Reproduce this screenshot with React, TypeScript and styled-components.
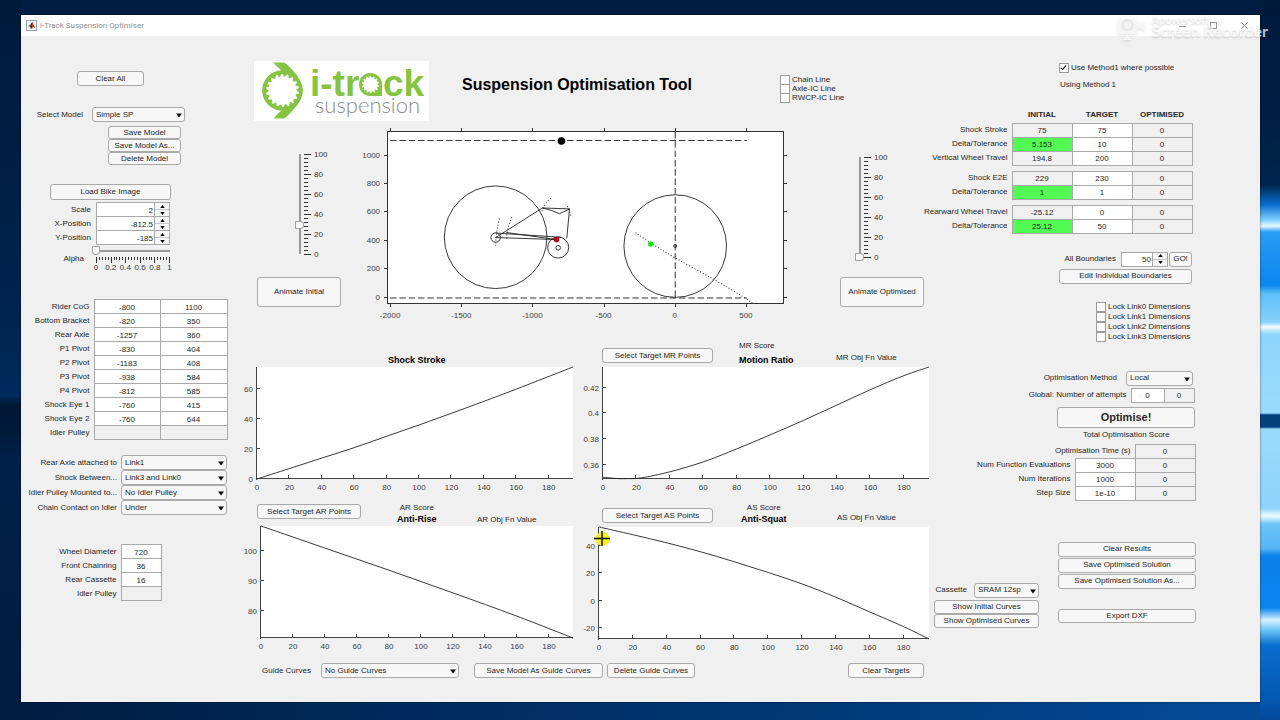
import React, { useId } from "react";
import styled, { createGlobalStyle } from "styled-components";

const GlobalStyle = createGlobalStyle`
  *, *::before, *::after { box-sizing: border-box; }
  html, body { margin: 0; padding: 0; }
  body {
    font-family: "Liberation Sans", Arial, sans-serif;
    font-size: 8px;
    line-height: 10px;
    color: #262626;
  }
  button, input, select { font: inherit; color: inherit; margin: 0; }
`;

/* ---------- desktop and window frame ---------- */

const Desktop = styled.div`
  position: relative;
  min-height: 100vh;
  padding: 15px 20px 18px 21px;
  background:
    linear-gradient(180deg,
      #001a3b 0, #001e44 120px, #00264f 185px, #0b6fd0 205px, #7fd0ff 220px, #e8f8ff 226px,
      #2a9df5 232px, #0a86ef 285px, #5fc0f8 294px, #86d2fa 322px, #f4fcff 327px, #8ed6fb 334px,
      #9adafc 413px, #03407c 415px, #03407c 427px, #9adafc 429px, #8fd4fb 508px, #f0fbff 516px,
      #6cc4f8 524px, #55b6f6 548px, #0a80ea 556px, #0a86f0 608px, #d8f2ff 620px, #6cc4f6 630px,
      #0a6ed0 645px, #0458b0 700px, #03489a 720px) right top / 20px 100% no-repeat,
    linear-gradient(180deg, #001a3b 0, #001e44 160px, #002652 340px, #002b5c 395px, #001836 405px,
      #001a3a 432px, #00204a 460px, #001e44 600px, #001c40 702px) left top / 21px 100% no-repeat,
    linear-gradient(90deg, #001c40 0, #002a5a 30%, #003a78 65%, #044c9a 100%) left bottom / 100% 18px no-repeat,
    #001c40;
`;

const Window = styled.main`
  display: flex;
  flex-direction: column;
  min-height: calc(100vh - 33px);
  background: #f0f0f0;
  box-shadow: 0 0 2px rgba(0, 0, 0, 0.6);
`;

const TitleBar = styled.header`
  display: flex;
  align-items: center;
  height: 21px;
  padding: 0 12px 0 5px;
  gap: 3px;
  background: #ffffff;
`;

const WindowTitle = styled.span`
  flex: 1;
  font-family: Roboto, "Open Sans", sans-serif;
  font-size: 8px;
  line-height: 12px;
  color: #8f8f8f;
`;

const CaptionButtons = styled.div`
  display: flex;
  gap: 24px;
`;

const CaptionButton = styled.button`
  width: 7px;
  height: 8px;
  padding: 0;
  border: 0;
  background: none;
  line-height: 0;
`;

const Body = styled.div`
  flex: 1;
  display: grid;
  grid-template-columns: 219px minmax(0, 1fr) 330px;
`;

const Column = styled.section`
  display: flex;
  flex-direction: column;
  min-width: 0;
`;

/* ---------- controls ---------- */

const Button = styled.button<{ $w?: number; $h?: number; $size?: number }>`
  display: block;
  flex: none;
  width: ${(p) => (p.$w ? `${p.$w}px` : "100%")};
  height: ${(p) => p.$h ?? 15}px;
  padding: 0;
  border: 1px solid #a9a9a9;
  border-radius: 3px;
  background: #f7f7f7;
  font-size: ${(p) => p.$size ?? 8}px;
  font-weight: ${(p) => (p.$size ? "bold" : "normal")};
  line-height: 10px;
  text-align: center;
  white-space: nowrap;
`;

const SelectBox = styled.span<{ $w: number }>`
  position: relative;
  display: block;
  flex: none;
  width: ${(p) => p.$w}px;
  height: 15px;

  select {
    display: block;
    appearance: none;
    width: 100%;
    height: 15px;
    padding: 0 12px 0 3px;
    border: 1px solid #a9a9a9;
    border-radius: 3px;
    background: #f7f7f7;
    line-height: 10px;
  }

  svg {
    position: absolute;
    right: 3px;
    top: 6px;
    pointer-events: none;
  }
`;

const CheckLabel = styled.label<{ $h: number }>`
  display: flex;
  align-items: center;
  gap: 2px;
  height: ${(p) => p.$h}px;
  white-space: nowrap;
`;

const CheckBox = styled.input.attrs({ type: "checkbox" })`
  appearance: none;
  position: relative;
  flex: none;
  width: 10px;
  height: 10px;
  border: 1px solid #9c9c9c;
  background: #ffffff;

  &:checked::after {
    content: "";
    position: absolute;
    left: 2px;
    top: 0;
    width: 3px;
    height: 6px;
    border: solid #111111;
    border-width: 0 1px 1px 0;
    transform: rotate(40deg);
  }
`;

const SpinnerFrame = styled.span<{ $w: number }>`
  display: flex;
  flex: none;
  width: ${(p) => p.$w}px;
  height: 15px;
  border: 1px solid #a9a9a9;
  background: #ffffff;

  input {
    flex: 1;
    min-width: 0;
    height: 13px;
    padding: 1px 1px 0 0;
    border: 0;
    background: transparent;
    text-align: right;
  }
`;

const SpinnerArrows = styled.span`
  display: flex;
  flex-direction: column;
  width: 15px;
  border-left: 1px solid #a9a9a9;

  button {
    flex: 1;
    display: flex;
    align-items: center;
    justify-content: center;
    min-height: 0;
    padding: 0;
    border: 0;
    background: #f7f7f7;
  }
  button + button { border-top: 1px solid #c4c4c4; }
`;

const Line = styled.div<{ $mt?: number; $gap?: number; $end?: number; $start?: number }>`
  display: flex;
  align-items: center;
  justify-content: ${(p) => (p.$end !== undefined ? "flex-end" : "flex-start")};
  gap: ${(p) => p.$gap ?? 0}px;
  margin-top: ${(p) => p.$mt ?? 0}px;
  padding-right: ${(p) => p.$end ?? 0}px;
  padding-left: ${(p) => p.$start ?? 0}px;
  white-space: nowrap;
`;

const FieldLabel = styled.label<{ $w: number }>`
  flex: none;
  width: ${(p) => p.$w}px;
  text-align: right;
  white-space: nowrap;
`;

const Stack = styled.div<{ $mt?: number; $ml?: number; $mr?: number; $gap?: number; $w?: number }>`
  display: flex;
  flex-direction: column;
  gap: ${(p) => p.$gap ?? 0}px;
  margin-top: ${(p) => p.$mt ?? 0}px;
  margin-left: ${(p) => p.$ml ?? 0}px;
  margin-right: ${(p) => p.$mr ?? 0}px;
  ${(p) => (p.$w ? `width: ${p.$w}px; flex: none;` : "")}
`;

const Spinners = styled.div`
  display: flex;
  flex-direction: column;
  margin-top: 2px;

  ${Line} + ${Line} { margin-top: -1px; }
`;

const DataTable = styled.table<{ $w: number; $mt: number }>`
  width: ${(p) => p.$w}px;
  margin-top: ${(p) => p.$mt}px;
  border-collapse: collapse;
  table-layout: fixed;

  tr { height: 14px; }
  th, td { padding: 0; vertical-align: middle; }
  th { font-weight: normal; }
  thead th { height: 15px; font-weight: bold; text-align: center; }
`;

const RowLabel = styled.label`
  display: flex;
  justify-content: flex-end;
  padding-right: 4px;
  line-height: 10px;
  white-space: nowrap;
`;

type Tone = "plain" | "locked" | "good";
const toneColor: Record<Tone, string> = { plain: "#ffffff", locked: "#f0f0f0", good: "#54fa54" };

const Cell = styled.td<{ $tone: Tone }>`
  border: 1px solid #a9a9a9;
  background: ${(p) => toneColor[p.$tone]};

  input {
    display: block;
    width: 100%;
    height: 13px;
    padding: 1px 0 0;
    border: 0;
    background: transparent;
    text-align: center;
  }
`;

const SpacerRow = styled.tr`
  && { height: 6px; }
  td { height: 6px; line-height: 0; }
`;

const Range = styled.input.attrs({ type: "range" })<{ $vertical?: boolean }>`
  appearance: none;
  display: block;
  flex: none;
  margin: 0;
  ${(p) =>
    p.$vertical
      ? `writing-mode: vertical-lr; direction: rtl; width: 9px; height: 108px;
         background: linear-gradient(#989898, #989898) center / 2px 100px no-repeat;`
      : `width: 82px; height: 9px;
         background: linear-gradient(#989898, #989898) center / 74px 2px no-repeat;`}

  &::-webkit-slider-runnable-track { background: transparent; }
  &::-webkit-slider-thumb {
    appearance: none;
    width: ${(p) => (p.$vertical ? 9 : 8)}px;
    height: ${(p) => (p.$vertical ? 8 : 9)}px;
    border: 1px solid #a0a0a0;
    border-radius: ${(p) => (p.$vertical ? "1px 5px 5px 1px" : "1px 1px 5px 5px")};
    background: #fafafa;
  }
`;

const Art = styled.svg`
  display: block;
  overflow: visible;
  font-family: "Liberation Sans", Arial, sans-serif;
  font-size: 8px;
`;

const Triangle = ({ up = false, w = 6, h = 4 }: { up?: boolean; w?: number; h?: number }) => (
  <svg width={w} height={h} viewBox="0 0 6 4" aria-hidden="true">
    <path d={up ? "M0 4H6L3 0Z" : "M0 0H6L3 4Z"} fill="#000" />
  </svg>
);

function Select({ id, w, value, label }: { id: string; w: number; value: string; label?: string }) {
  return (
    <SelectBox $w={w}>
      <select id={id} aria-label={label} defaultValue={value}>
        <option>{value}</option>
      </select>
      <Triangle h={5} />
    </SelectBox>
  );
}

function Spinner({ id, w, value }: { id: string; w: number; value: string }) {
  return (
    <SpinnerFrame $w={w}>
      <input id={id} type="text" inputMode="decimal" defaultValue={value} />
      <SpinnerArrows>
        <button type="button" aria-label="Increase"><Triangle up w={5} h={3} /></button>
        <button type="button" aria-label="Decrease"><Triangle w={5} h={3} /></button>
      </SpinnerArrows>
    </SpinnerFrame>
  );
}

type CellSpec = [string, Tone] | null;

function DataRow({ label, cells, span = 1 }: { label: string; cells: CellSpec[]; span?: number }) {
  const id = useId();
  return (
    <tr>
      <th scope="row" colSpan={span}>
        <RowLabel htmlFor={id}>{label}</RowLabel>
      </th>
      {cells.map((c, i) =>
        c ? (
          <Cell key={i} $tone={c[1]}>
            <input
              id={i === 0 ? id : undefined}
              aria-label={`${label} ${i + 1}`}
              defaultValue={c[0]}
              readOnly={c[1] !== "plain"}
            />
          </Cell>
        ) : null
      )}
    </tr>
  );
}

function Check({ text, h = 10, checked = false }: { text: string; h?: number; checked?: boolean }) {
  return (
    <CheckLabel $h={h}>
      <CheckBox defaultChecked={checked} />
      {text}
    </CheckLabel>
  );
}

/* ---------- left column ---------- */

const pivots: [string, string, string][] = [
  ["Rider CoG", "-800", "1100"],
  ["Bottom Bracket", "-820", "350"],
  ["Rear Axle", "-1257", "360"],
  ["P1 Pivot", "-830", "404"],
  ["P2 Pivot", "-1183", "408"],
  ["P3 Pivot", "-938", "584"],
  ["P4 Pivot", "-812", "585"],
  ["Shock Eye 1", "-760", "415"],
  ["Shock Eye 2", "-760", "644"],
  ["Idler Pulley", "", ""],
];

const links: [string, string][] = [
  ["Rear Axle attached to", "Link1"],
  ["Shock Between...", "Link3 and Link0"],
  ["Idler Pulley Mounted to...", "No Idler Pulley"],
  ["Chain Contact on Idler", "Under"],
];

const drivetrain: [string, string][] = [
  ["Wheel Diameter", "720"],
  ["Front Chainring", "36"],
  ["Rear Cassette", "16"],
  ["Idler Pulley", ""],
];

const AlphaTicks = () => (
  <Art width="82" height="18" viewBox="0 0 82 18" fill="#333" textAnchor="middle">
    {Array.from({ length: 26 }, (_, i) => (
      <rect key={i} x={Math.round(4 + i * 2.92)} y="2" width="1" height={i % 5 === 0 ? 6 : 3} />
    ))}
    {["0", "0.2", "0.4", "0.6", "0.8", "1"].map((t, i) => (
      <text key={t} x={4 + i * 14.7} y="15">{t}</text>
    ))}
  </Art>
);

function ModelColumn() {
  return (
    <Column>
      <Line $mt={35} $start={56}><Button $w={67}>Clear All</Button></Line>
      <Line $mt={21} $start={14} $gap={9}>
        <FieldLabel $w={48} htmlFor="model">Select Model</FieldLabel>
        <Select id="model" w={93} value="Simple SP" />
      </Line>
      <Stack $mt={4} $ml={87} $w={73}>
        <Button $h={13}>Save Model</Button>
        <Button $h={13}>Save Model As...</Button>
        <Button $h={13}>Delete Model</Button>
      </Stack>
      <Line $mt={19} $start={29}><Button $w={121} $h={16}>Load Bike Image</Button></Line>
      <Spinners>
        {[["Scale", "2"], ["X-Position", "-812.5"], ["Y-Position", "-185"]].map(([l, v]) => (
          <Line key={l} $gap={5}>
            <FieldLabel $w={70} htmlFor={l}>{l}</FieldLabel>
            <Spinner id={l} w={74} value={v} />
          </Line>
        ))}
      </Spinners>
      <Line $gap={8}>
        <FieldLabel $w={63} htmlFor="alpha">Alpha</FieldLabel>
        <Stack $mt={1}>
          <Range id="alpha" min="0" max="1" step="0.01" defaultValue="0" />
          <AlphaTicks />
        </Stack>
      </Line>
      <DataTable $w={206} $mt={26}>
        <colgroup><col width="73" /><col width="66" /><col width="67" /></colgroup>
        <tbody>
          {pivots.map(([l, x, y]) => (
            <DataRow key={l} label={l} cells={[[x, x ? "plain" : "locked"], [y, y ? "plain" : "locked"]]} />
          ))}
        </tbody>
      </DataTable>
      <Stack $mt={15}>
        {links.map(([l, v]) => (
          <Line key={l} $gap={4}>
            <FieldLabel $w={96} htmlFor={l}>{l}</FieldLabel>
            <Select id={l} w={106} value={v} />
          </Line>
        ))}
      </Stack>
      <DataTable $w={140} $mt={29}>
        <colgroup><col width="100" /><col width="40" /></colgroup>
        <tbody>
          {drivetrain.map(([l, v]) => (
            <DataRow key={l} label={l} cells={[[v, v ? "plain" : "locked"]]} />
          ))}
        </tbody>
      </DataTable>
    </Column>
  );
}

/* ---------- centre column ---------- */

const TopRow = styled.div`
  display: flex;
  align-items: flex-start;
  height: 90px;
  padding: 25px 0 0 14px;
`;

const Heading = styled.h1`
  margin: 14px 0 0 33px;
  font-size: 16px;
  line-height: 20px;
  color: #000000;
  white-space: nowrap;
`;

const LineChecks = styled.div`
  width: 65px;
  margin: 14px 85px 0 auto;
`;

const PlotRow = styled.div`
  display: flex;
  align-items: flex-start;
  height: 198px;
  padding: 0 6px 0 17px;
`;

const SliderColumn = styled.div<{ $pad: number; $top: number }>`
  display: flex;
  flex-direction: column;
  justify-content: space-between;
  flex: none;
  width: 84px;
  height: 181px;
  padding-top: ${(p) => p.$top}px;

  & > div { display: flex; padding-left: ${(p) => p.$pad}px; }
`;

const PlotFrame = styled.div`
  flex: 1;
  min-width: 0;
  margin: 0 49px 0 9px;
`;

const ChartGrid = styled.div`
  display: grid;
  grid-template-columns: 340fr 350fr;
  margin-top: 16px;
  row-gap: 8px;
`;

const ChartHead = styled.div<{ $h: number; $cols: string; $start: number }>`
  display: grid;
  grid-template-columns: ${(p) => p.$cols};
  height: ${(p) => p.$h}px;
  padding-left: ${(p) => p.$start}px;
  white-space: nowrap;
`;

const ChartNames = styled.div<{ $align: string; $gap: number }>`
  display: flex;
  flex-direction: column;
  align-items: ${(p) => p.$align};
  justify-self: start;
  gap: ${(p) => p.$gap}px;
  padding-top: 1px;

  h2 { margin: 0; font-size: 9px; line-height: 12px; color: #000000; }
`;

const ObjValue = styled.span<{ $top: number }>`
  padding-top: ${(p) => p.$top}px;
`;

const Inset = styled.div<{ $top: number }>`
  padding-top: ${(p) => p.$top}px;
`;

const GuideRow = styled.div`
  display: flex;
  align-items: center;
  margin-top: 9px;
  padding: 0 6px 0 22px;

  label { width: 59px; }
  ${SelectBox} { margin-right: 15px; }
  button + button { margin-left: 4px; }
  button:last-child { margin-left: auto; }
`;

const GearTeeth = ({ cx, cy, r, n, depth }: { cx: number; cy: number; r: number; n: number; depth: number }) => {
  const pts: string[] = [];
  for (let i = 0; i < n; i++) {
    [[0.0, 0], [0.3, depth], [0.55, depth], [0.8, 0]].forEach(([f, d]) => {
      const a = ((i + f) / n) * Math.PI * 2;
      pts.push(`${(cx + (r + d) * Math.cos(a)).toFixed(2)},${(cy + (r + d) * Math.sin(a)).toFixed(2)}`);
    });
  }
  return <polygon points={pts.join(" ")} fill="#fff" />;
};

const Logo = () => (
  <Art width="175" height="60" viewBox="0 0 175 60" role="img" aria-label="i-track suspension">
    <rect width="175" height="60" fill="#fff" />
    <g fill="#84c441">
      <circle cx="28.5" cy="29.5" r="20.3" />
      <path d="M19.5 1.5H30Q33 2.5 44 15.5L38 20L26 13L28 10Q23 6 19.5 1.5Z" />
      <path d="M19.5 57.5H30Q33 56 44 43.5L38 39L26 46L28 49Q23 53 19.5 57.5Z" />
    </g>
    <GearTeeth cx={28.5} cy={29.5} r={14} n={18} depth={2.6} />
    <text y="35" fontFamily="Liberation Sans" fontSize="37" fontWeight="bold" fill="#84c441">
      <tspan x="56">i-tr</tspan>
      <tspan x="129">ck</tspan>
    </text>
    <path d="M128 35V23A11.500 11.500 0 1 0 116.500 35Z" fill="#84c441" />
    <GearTeeth cx={116.5} cy={23.5} r={7} n={14} depth={1.8} />
    <text x="61" y="52" fontFamily="Lato" fontWeight="300" fontSize="22" fill="#8c8c8c">suspension</text>
  </Art>
);

const SliderScale = () => (
  <Art width="28" height="108" viewBox="0 0 28 108" fill="#333">
    {Array.from({ length: 26 }, (_, i) => (
      <rect key={i} x="0" y={4 + i * 4} width={i % 5 === 0 ? 7 : 4} height="1" />
    ))}
    {[100, 80, 60, 40, 20, 0].map((v, i) => (
      <text key={v} x="10" y={7 + i * 20}>{v}</text>
    ))}
  </Art>
);

function BikePlot() {
  const xs = [390, 461, 532, 603, 674, 745];
  const ys = [155, 183, 211, 240, 268, 297];
  return (
    <Art width="100%" viewBox="350 126 440 198" role="img" aria-label="Suspension layout">
      <rect x="387.5" y="131.5" width="395" height="172" fill="#fff" stroke="#333" shapeRendering="crispEdges" />
      <g fill="#333" shapeRendering="crispEdges">
        {xs.map((x) => (
          <React.Fragment key={x}>
            <rect x={x} y="128" width="1" height="3" />
            <rect x={x} y="304" width="1" height="3" />
          </React.Fragment>
        ))}
        {ys.map((y) => (
          <React.Fragment key={y}>
            <rect x="384" y={y} width="3" height="1" />
            <rect x="783" y={y} width="3" height="1" />
          </React.Fragment>
        ))}
      </g>
      <g fill="#404040" textAnchor="middle">
        {xs.map((x, i) => (
          <text key={x} x={x} y="318">{-2000 + i * 500}</text>
        ))}
      </g>
      <g fill="#404040" textAnchor="end">
        {ys.map((y, i) => (
          <text key={y} x="380" y={y + 3}>{1000 - i * 200}</text>
        ))}
      </g>
      <g fill="none" stroke="#333" strokeDasharray="6.4 2.9">
        <path d="M390 140.5H746M390 297.5H746M674.5 132V297" />
      </g>
      <g fill="none" stroke="#222" strokeWidth="0.9">
        <circle cx="495.3" cy="237" r="51.2" />
        <circle cx="674.5" cy="245.8" r="51.2" />
        <circle cx="495.3" cy="237.3" r="4.7" />
        <circle cx="557.7" cy="247.3" r="10.5" />
        <circle cx="557.7" cy="247.5" r="2.3" />
        <circle cx="674.5" cy="245.8" r="1.5" />
        <path d="M495.3 237.3L542 207.8L569 208.7L566.3 238" />
        <path d="M542 207.8Q552 210 559 213.5Q565 211 569 208.7" />
        <path d="M495.3 232.8L561 237M506 232.3L556 239.3L495.3 237.3" />
      </g>
      <g fill="none" stroke="#222" strokeDasharray="1 2">
        <path d="M499 218.5Q495.5 232 495.3 246" />
        <path d="M511.5 217Q506.5 228 506.3 239" />
        <path d="M550.5 198Q543 204 541.3 212" />
        <path d="M567 206L570.5 216" />
        <path d="M635 232.3Q653 246 694 268.5T752 303" />
      </g>
      <circle cx="561" cy="141" r="3.8" fill="#000" />
      <circle cx="556" cy="239.3" r="2.8" fill="#c00010" />
      <circle cx="650" cy="243.7" r="2.8" fill="#1ee61e" />
    </Art>
  );
}

type Pt = [number, number];

function smooth(p: Pt[]) {
  let d = `M${p[0][0]} ${p[0][1]}`;
  for (let i = 0; i < p.length - 1; i++) {
    const a = p[i - 1] ?? p[i];
    const b = p[i];
    const c = p[i + 1];
    const e = p[i + 2] ?? c;
    d += `C${b[0] + (c[0] - a[0]) / 6} ${b[1] + (c[1] - a[1]) / 6} ${c[0] - (e[0] - b[0]) / 6} ${c[1] - (e[1] - b[1]) / 6} ${c[0]} ${c[1]}`;
  }
  return d;
}

interface ChartProps {
  w: number;
  left: number;
  right: number;
  top: number;
  bottom: number;
  yMin: number;
  yMax: number;
  yTicks: number[];
  data: Pt[];
  name: string;
  children?: React.ReactNode;
}

function Chart({ w, left, right, top, bottom, yMin, yMax, yTicks, data, name, children }: ChartProps) {
  const sx = (v: number) => left + (v / 195) * (right - left);
  const sy = (v: number) => bottom - ((v - yMin) / (yMax - yMin)) * (bottom - top);
  const xTicks = Array.from({ length: 10 }, (_, i) => i * 20);
  return (
    <Art width="100%" viewBox={`0 0 ${w} 128`} role="img" aria-label={name}>
      <rect x={left} y={top} width={right - left} height={bottom - top} fill="#fff" />
      <g fill="#444" shapeRendering="crispEdges">
        <rect x={left - 1} y={top} width="1" height={bottom - top + 1} />
        <rect x={left - 1} y={bottom - 1} width={right - left + 1} height="1" />
        {xTicks.map((t) => (
          <rect key={t} x={Math.round(sx(t)) - 1} y={bottom - 4} width="1" height="3" />
        ))}
        {yTicks.map((t) => (
          <rect key={t} x={left} y={Math.round(sy(t)) - 1} width="3" height="1" />
        ))}
      </g>
      <g fill="#404040" textAnchor="middle">
        {xTicks.map((t) => (
          <text key={t} x={sx(t)} y={bottom + 11}>{t}</text>
        ))}
      </g>
      <g fill="#404040" textAnchor="end">
        {yTicks.map((t) => (
          <text key={t} x={left - 4} y={sy(t) + 3}>{t}</text>
        ))}
      </g>
      <path d={smooth(data.map(([x, y]) => [sx(x), sy(y)] as Pt))} fill="none" stroke="#222" strokeWidth="0.9" />
      {children}
    </Art>
  );
}

const strokeData: Pt[] = [[0, 0], [20, 7], [40, 14], [60, 21], [80, 28.6], [100, 36.2], [120, 44], [140, 52], [160, 60.2], [195, 75]];
const ratioData: Pt[] = [[0, 0.3504], [8, 0.3494], [14, 0.3493], [23, 0.3499], [40, 0.3546], [60, 0.3623], [80, 0.3724], [100, 0.3833], [120, 0.3946], [140, 0.4065], [160, 0.4184], [180, 0.4293], [195, 0.436]];
const riseData: Pt[] = [[0, 108.3], [40, 100.9], [80, 93.5], [120, 85.9], [160, 78.1], [195, 70.8]];
const squatData: Pt[] = [[0, 53.8], [20, 48.2], [40, 42.3], [60, 35.8], [80, 28.5], [100, 20.7], [120, 12.4], [140, 2.7], [160, -8], [180, -18.7], [195, -27.7]];

function PlotColumn() {
  return (
    <Column>
      <TopRow>
        <Logo />
        <Heading>Suspension Optimisation Tool</Heading>
        <LineChecks>
          <Check text="Chain Line" h={9} />
          <Check text="Axle-IC Line" h={9} />
          <Check text="RWCP-IC Line" h={10} />
        </LineChecks>
      </TopRow>
      <PlotRow>
        <SliderColumn $pad={38} $top={24}>
          <div>
            <Range $vertical aria-label="Initial travel" min="0" max="100" defaultValue="29" />
            <SliderScale />
          </div>
          <Button $h={30}>Animate Initial</Button>
        </SliderColumn>
        <PlotFrame><BikePlot /></PlotFrame>
        <SliderColumn $pad={15} $top={27}>
          <div>
            <Range $vertical aria-label="Optimised travel" min="0" max="100" defaultValue="0" />
            <SliderScale />
          </div>
          <Button $h={30}>Animate Optimised</Button>
        </SliderColumn>
      </PlotRow>

      <ChartGrid>
        <div>
          <ChartHead $h={26} $cols="1fr" $start={148}>
            <Inset $top={13}>
              <ChartNames $align="flex-start" $gap={0}><h2>Shock Stroke</h2></ChartNames>
            </Inset>
          </ChartHead>
          <Chart name="Shock Stroke" w={340} left={17} right={333} top={1} bottom={113} yMin={0} yMax={75} yTicks={[0, 20, 40, 60]} data={strokeData} />
        </div>
        <div>
          <ChartHead $h={26} $cols="137px 97px 1fr" $start={22}>
            <Inset $top={8}><Button $w={111}>Select Target MR Points</Button></Inset>
            <ChartNames $align="flex-start" $gap={3}>
              <span>MR Score</span>
              <h2>Motion Ratio</h2>
            </ChartNames>
            <ObjValue $top={13}>MR Obj Fn Value</ObjValue>
          </ChartHead>
          <Chart name="Motion Ratio" w={350} left={23} right={349} top={1} bottom={113} yMin={0.349} yMax={0.436} yTicks={[0.36, 0.38, 0.4, 0.42]} data={ratioData} />
        </div>
        <div>
          <ChartHead $h={24} $cols="140px 80px 1fr" $start={17}>
            <Inset $top={2}><Button $w={104}>Select Target AR Points</Button></Inset>
            <ChartNames $align="center" $gap={0}>
              <span>AR Score</span>
              <h2>Anti-Rise</h2>
            </ChartNames>
            <ObjValue $top={13}>AR Obj Fn Value</ObjValue>
          </ChartHead>
          <Chart name="Anti-Rise" w={340} left={21} right={333} top={0} bottom={112} yMin={70.8} yMax={108.3} yTicks={[80, 90, 100]} data={riseData} />
        </div>
        <div>
          <ChartHead $h={24} $cols="139px 96px 1fr" $start={22}>
            <Inset $top={6}><Button $w={111}>Select Target AS Points</Button></Inset>
            <ChartNames $align="center" $gap={0}>
              <span>AS Score</span>
              <h2>Anti-Squat</h2>
            </ChartNames>
            <ObjValue $top={11}>AS Obj Fn Value</ObjValue>
          </ChartHead>
          <Chart name="Anti-Squat" w={350} left={19} right={349} top={1} bottom={113} yMin={-27.7} yMax={53.8} yTicks={[-20, 0, 20, 40]} data={squatData}>
            <circle cx="22.5" cy="13" r="7" fill="#f7f01a" />
            <path d="M14 12.5H30M22 5V20" stroke="#111" strokeWidth="1.5" />
          </Chart>
        </div>
      </ChartGrid>

      <GuideRow>
        <label htmlFor="guide">Guide Curves</label>
        <Select id="guide" w={138} value="No Guide Curves" />
        <Button $w={129}>Save Model As Guide Curves</Button>
        <Button $w={88}>Delete Guide Curves</Button>
        <Button $w={76}>Clear Targets</Button>
      </GuideRow>
    </Column>
  );
}

/* ---------- right column ---------- */

const Caption = styled.p<{ $mt: number; $ml: number }>`
  margin: ${(p) => p.$mt}px 0 0 ${(p) => p.$ml}px;
`;

function OptimiserColumn() {
  return (
    <Column>
      <Stack $mt={27} $ml={129}><Check text="Use Method1 where possible" checked /></Stack>
      <Caption $mt={7} $ml={130}>Using Method 1</Caption>

      <DataTable $w={262} $mt={18}>
        <colgroup><col width="82" /><col width="60" /><col width="60" /><col width="60" /></colgroup>
        <thead>
          <tr>
            <td />
            <th scope="col">INITIAL</th>
            <th scope="col">TARGET</th>
            <th scope="col">OPTIMISED</th>
          </tr>
        </thead>
        <tbody>
          <DataRow label="Shock Stroke" cells={[["75", "locked"], ["75", "plain"], ["0", "locked"]]} />
          <DataRow label="Delta/Tolerance" cells={[["5.153", "good"], ["10", "plain"], ["0", "locked"]]} />
          <DataRow label="Vertical Wheel Travel" cells={[["194.8", "locked"], ["200", "plain"], ["0", "locked"]]} />
          <SpacerRow><td colSpan={4} /></SpacerRow>
          <DataRow label="Shock E2E" cells={[["229", "locked"], ["230", "plain"], ["0", "locked"]]} />
          <DataRow label="Delta/Tolerance" cells={[["1", "good"], ["1", "plain"], ["0", "locked"]]} />
          <SpacerRow><td colSpan={4} /></SpacerRow>
          <DataRow label="Rearward Wheel Travel" cells={[["-25.12", "locked"], ["0", "plain"], ["0", "locked"]]} />
          <DataRow label="Delta/Tolerance" cells={[["25.12", "good"], ["50", "plain"], ["0", "locked"]]} />
        </tbody>
      </DataTable>

      <Line $mt={18} $end={68}>
        <FieldLabel $w={57} htmlFor="bounds">All Boundaries</FieldLabel>
        <Line $start={5} $gap={1}>
          <Spinner id="bounds" w={47} value="50" />
          <Button $w={23}>GO!</Button>
        </Line>
      </Line>
      <Line $mt={2} $end={68}><Button $w={133}>Edit Individual Boundaries</Button></Line>

      <Stack $mt={18} $ml={166}>
        {[0, 1, 2, 3].map((n) => <Check key={n} text={`Lock Link${n} Dimensions`} />)}
      </Stack>

      <Line $mt={29} $end={67} $gap={9}>
        <FieldLabel $w={75} htmlFor="method">Optimisation Method</FieldLabel>
        <Select id="method" w={67} value="Local" />
      </Line>
      <DataTable $w={264} $mt={2}>
        <colgroup><col width="201" /><col width="33" /><col width="30" /></colgroup>
        <tbody>
          <DataRow label="Global: Number of attempts" cells={[["0", "plain"], ["0", "locked"]]} />
        </tbody>
      </DataTable>
      <Line $mt={4} $end={65}><Button $w={138} $h={21} $size={11}>Optimise!</Button></Line>
      <Caption $mt={2} $ml={153}>Total Optimisation Score</Caption>
      <DataTable $w={265} $mt={4}>
        <colgroup><col width="145" /><col width="60" /><col width="60" /></colgroup>
        <tbody>
          <DataRow label="Optimisation Time (s)" span={2} cells={[["0", "locked"]]} />
          <DataRow label="Num Function Evaluations" cells={[["3000", "plain"], ["0", "locked"]]} />
          <DataRow label="Num Iterations" cells={[["1000", "plain"], ["0", "locked"]]} />
          <DataRow label="Step Size" cells={[["1e-10", "plain"], ["0", "locked"]]} />
        </tbody>
      </DataTable>

      <Line $mt={36} $end={64} $gap={19}>
        <Stack $w={105} $mt={46}>
          <Line $gap={7}>
            <FieldLabel $w={33} htmlFor="cassette">Cassette</FieldLabel>
            <Select id="cassette" w={65} value="SRAM 12sp" />
          </Line>
          <Stack $mt={2}>
            <Button $h={14}>Show Initial Curves</Button>
            <Button $h={14}>Show Optimised Curves</Button>
          </Stack>
        </Stack>
        <Stack $w={138} $gap={1}>
          <Button>Clear Results</Button>
          <Button>Save Optimised Solution</Button>
          <Button>Save Optimised Solution As...</Button>
          <Stack $mt={19}><Button $h={14}>Export DXF</Button></Stack>
        </Stack>
      </Line>
    </Column>
  );
}

/* ---------- recorder watermark ---------- */

const Watermark = styled.div`
  position: absolute;
  top: 15px;
  right: 12px;
  display: flex;
  gap: 4px;
  color: rgba(255, 255, 255, 0.72);
  font-family: Lato, sans-serif;
  font-weight: bold;
  text-shadow: 0 1px 2px rgba(0, 0, 0, 0.18);
  white-space: nowrap;
  pointer-events: none;

  small { display: block; font-size: 11px; line-height: 9px; }
  span { display: block; font-size: 16px; line-height: 14px; }
  svg { filter: drop-shadow(0 1px 1px rgba(0, 0, 0, 0.18)); }
`;

export default function App() {
  return (
    <Desktop>
      <GlobalStyle />
      <Window>
        <TitleBar>
          <svg width="11" height="11" viewBox="0 0 11 11" aria-hidden="true">
            <rect x="0.5" y="0.5" width="10" height="10" fill="#eef4fa" stroke="#93a5b5" />
            <path d="M1.5 6L4.2 4.8L5 7Z" fill="#3d7fb8" />
            <path d="M4 5.5L6.3 2L9.3 8.2L7.3 7L5 9Z" fill="#c8421c" />
            <path d="M4 5.5L6.3 2L6 7L5 9Z" fill="#5a2418" />
          </svg>
          <WindowTitle>i-Track Suspension Optimiser</WindowTitle>
          <CaptionButtons>
            <CaptionButton type="button" aria-label="Minimise">
              <svg width="7" height="8"><path d="M0 4.5H7" stroke="#999" /></svg>
            </CaptionButton>
            <CaptionButton type="button" aria-label="Maximise">
              <svg width="7" height="8"><rect x="0.5" y="0.5" width="6" height="6" fill="none" stroke="#999" /></svg>
            </CaptionButton>
            <CaptionButton type="button" aria-label="Close">
              <svg width="7" height="8"><path d="M0.5 0.5L6.5 6.5M6.5 0.5L0.5 6.5" stroke="#888" /></svg>
            </CaptionButton>
          </CaptionButtons>
        </TitleBar>
        <Body>
          <ModelColumn />
          <PlotColumn />
          <OptimiserColumn />
        </Body>
      </Window>
      <Watermark>
        <svg width="32" height="26" viewBox="0 0 30 26" aria-hidden="true">
          <path d="M4 3H20Q22 3 22 5V9L29 5V16L22 13V17Q22 19 20 19H4Q1 19 1 16V6Q1 3 4 3Z" fill="#fff" fillOpacity="0.6" />
          <circle cx="11.5" cy="10" r="5" fill="none" stroke="#e6e6e6" strokeWidth="2" />
          <path d="M11 19L7 25H16Z" fill="#fff" fillOpacity="0.7" />
        </svg>
        <div>
          <small>Apowersoft</small>
          <span>Screen Recorder</span>
        </div>
      </Watermark>
    </Desktop>
  );
}
